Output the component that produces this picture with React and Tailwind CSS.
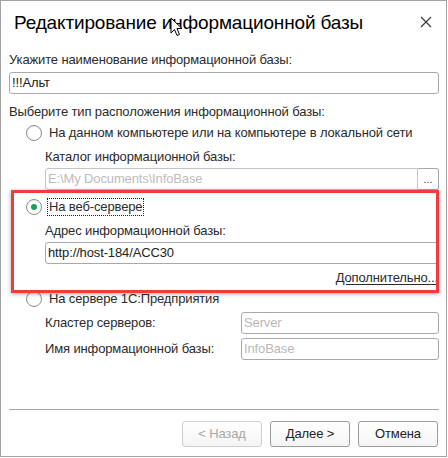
import React from "react";

function Radio({ checked }) {
  return (
    <span className="w-[16px] h-[16px] rounded-full border border-[#8c8c8c] bg-white flex items-center justify-center shrink-0 shadow-[inset_0_1px_1px_rgba(0,0,0,0.08)]">
      {checked && <span className="w-[6px] h-[6px] rounded-full bg-[#16a05a]" />}
    </span>
  );
}

function Input({ value, placeholder, className = "" }) {
  return (
    <div className={"h-[22px] border border-[#a9a9a9] rounded-[3px] bg-white flex items-center px-[2px] " + className}>
      {value ? (
        <span className="text-[#222]">{value}</span>
      ) : (
        <span className="text-[#b8b8b8]">{placeholder}</span>
      )}
    </div>
  );
}

function Btn({ children, disabled }) {
  return (
    <div
      className={
        "h-[26px] w-[80px] rounded-[3px] border flex items-center justify-center bg-gradient-to-b from-white to-[#f4f4f4] " +
        (disabled ? "border-[#cfcfcf] text-[#a8a8a8]" : "border-[#9c9c9c] text-[#222]")
      }
    >
      {children}
    </div>
  );
}

export default function App() {
  return (
    <div className="w-[447px] h-[457px] border border-[#a3a3a3] bg-white relative flex flex-col font-['Liberation_Sans',Arial,sans-serif] text-[13px] leading-[16px] tracking-[-0.13px] text-[#2b2b2b]">
      {/* Title */}
      <div className="h-[51px] flex items-start pl-[13px] pr-[13px] pt-[10px]">
        <div className="flex-1 text-[19px] leading-[24px] text-black font-['Liberation_Sans',Arial,sans-serif] tracking-[-0.15px]">
          Редактирование информационной базы
        </div>
        <svg width="12" height="12" viewBox="0 0 12 12" className="mt-[5px] mr-[1px]">
          <path d="M1 1 L11 11 M11 1 L1 11" stroke="#3a3a3a" strokeWidth="1.2" />
        </svg>
      </div>

      {/* Body */}
      <div className="pl-[8px] pr-[7px] flex flex-col">
        <div className="h-[16px] flex items-center">Укажите наименование информационной базы:</div>
        <Input value="!!!Альт" className="mt-[4px] h-[21px]" />

        <div className="h-[16px] mt-[10px] flex items-center">Выберите тип расположения информационной базы:</div>

        <div className="h-[16px] mt-[5px] flex items-center pl-[17px] gap-[7px]">
          <Radio />
          <span>На данном компьютере или на компьютере в локальной сети</span>
        </div>
        <div className="h-[16px] mt-[8px] pl-[36px] flex items-center">Каталог информационной базы:</div>
        <div className="mt-[3px] pl-[36px] flex">
          <div className="flex-1 h-[22px] border border-[#c4c4c4] rounded-l-[3px] flex items-center px-[2px] text-[#bcbcbc]">
            E:\My Documents\InfoBase
          </div>
          <div className="w-[21px] h-[22px] border border-l-0 border-[#a9a9a9] rounded-r-[3px] flex items-end justify-center pb-[5px] text-[#444] text-[11px] leading-[10px]">
            ...
          </div>
        </div>

        <div className="h-[18px] mt-[8px] flex items-center pl-[17px] gap-[5px]">
          <Radio checked />
          <span className="border border-dotted border-[#222] px-[1px] h-[18px] flex items-center">На веб-сервере</span>
        </div>
        <div className="h-[16px] mt-[7px] pl-[36px] flex items-center">Адрес информационной базы:</div>
        <div className="mt-[3px] pl-[36px]">
          <Input value="http://host-184/ACC30" />
        </div>
        <div className="h-[16px] mt-[6px] flex justify-end pr-[1px]">
          <span className="underline underline-offset-[2px]">Дополнительно...</span>
        </div>

        <div className="h-[16px] mt-[5px] flex items-center pl-[17px] gap-[7px]">
          <Radio />
          <span>На сервере 1С:Предприятия</span>
        </div>
        <div className="mt-[5px] pl-[36px] flex items-center">
          <span className="flex-1">Кластер серверов:</span>
          <Input placeholder="Server" className="w-[198px]" />
        </div>
        <div className="mt-[4px] pl-[36px] flex items-center">
          <span className="flex-1">Имя информационной базы:</span>
          <Input placeholder="InfoBase" className="w-[198px]" />
        </div>
      </div>

      {/* Footer */}
      <div className="mt-auto mx-[8px] mr-[7px] border-t border-[#a8a8a8] pt-[11px] pb-[9px] flex justify-end gap-[8px] pr-[1px]">
        <Btn disabled>&lt; Назад</Btn>
        <Btn>Далее &gt;</Btn>
        <Btn>Отмена</Btn>
      </div>

      {/* Annotation highlight */}
      <div className="absolute left-[10px] top-[189px] w-[428px] h-[103px] border-[3px] border-[#f03c3c] shadow-[0_1px_4px_rgba(0,0,0,0.35)] pointer-events-none" />

      {/* Mouse cursor */}
      <svg className="absolute left-[169px] top-[16px]" width="13" height="20" viewBox="0 0 13 20">
        <path d="M1 1 L1 16 L4.5 12.5 L7 18.5 L9.5 17.5 L7 11.5 L12 11.5 Z" fill="white" stroke="black" strokeWidth="1" strokeLinejoin="miter" />
      </svg>
    </div>
  );
}
